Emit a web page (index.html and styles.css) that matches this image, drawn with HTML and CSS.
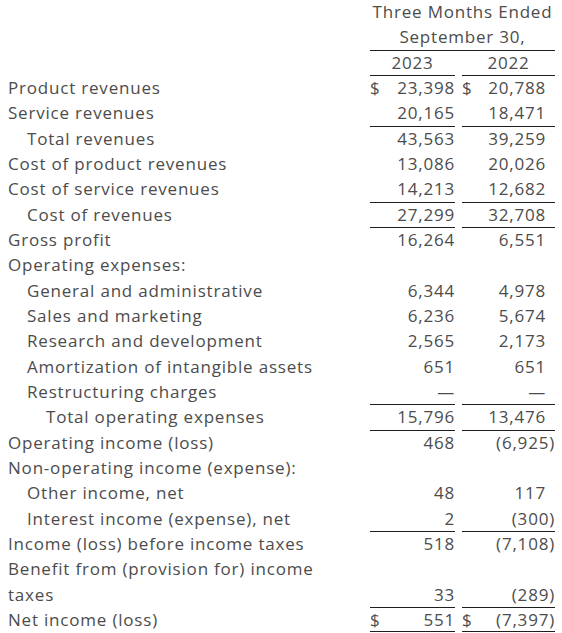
FILE: index.html
```html
<!DOCTYPE html>
<html lang="en">
<head>
    <meta charset="UTF-8">
    <meta name="viewport" content="width=device-width, initial-scale=1.0">
    <title>Condensed Statements of Operations</title>
    <link rel="stylesheet" href="styles.css">
</head>
<body>

<table class="ops">
    <colgroup>
        <col class="c-label">
        <col class="c-num">
        <col class="c-gap">
        <col class="c-num2">
    </colgroup>
    <thead>
        <tr class="head">
            <td></td>
            <td colspan="3" class="center">Three Months Ended</td>
        </tr>
        <tr class="head">
            <td></td>
            <td colspan="3" class="center">September 30,</td>
        </tr>
        <tr class="years">
            <td></td>
            <td class="center rule">2023</td>
            <td class="rule"></td>
            <td class="center rule">2022</td>
        </tr>
    </thead>
    <tbody>
        <tr>
            <td>Product revenues</td>
            <td class="num rule"><span class="cur">$</span>23,398</td>
            <td></td>
            <td class="num num2 rule"><span class="cur">$</span>20,788</td>
        </tr>
        <tr>
            <td>Service revenues</td>
            <td class="num">20,165</td>
            <td></td>
            <td class="num num2">18,471</td>
        </tr>
        <tr>
            <td class="i1">Total revenues</td>
            <td class="num rule">43,563</td>
            <td></td>
            <td class="num num2 rule">39,259</td>
        </tr>
        <tr>
            <td>Cost of product revenues</td>
            <td class="num">13,086</td>
            <td></td>
            <td class="num num2">20,026</td>
        </tr>
        <tr>
            <td>Cost of service revenues</td>
            <td class="num">14,213</td>
            <td></td>
            <td class="num num2">12,682</td>
        </tr>
        <tr>
            <td class="i1">Cost of revenues</td>
            <td class="num rule">27,299</td>
            <td></td>
            <td class="num num2 rule">32,708</td>
        </tr>
        <tr>
            <td>Gross profit</td>
            <td class="num rule">16,264</td>
            <td></td>
            <td class="num num2 rule">6,551</td>
        </tr>
        <tr>
            <td>Operating expenses:</td>
            <td></td>
            <td></td>
            <td></td>
        </tr>
        <tr>
            <td class="i1">General and administrative</td>
            <td class="num">6,344</td>
            <td></td>
            <td class="num num2">4,978</td>
        </tr>
        <tr>
            <td class="i1">Sales and marketing</td>
            <td class="num">6,236</td>
            <td></td>
            <td class="num num2">5,674</td>
        </tr>
        <tr>
            <td class="i1">Research and development</td>
            <td class="num">2,565</td>
            <td></td>
            <td class="num num2">2,173</td>
        </tr>
        <tr>
            <td class="i1">Amortization of intangible assets</td>
            <td class="num">651</td>
            <td></td>
            <td class="num num2">651</td>
        </tr>
        <tr>
            <td class="i1">Restructuring charges</td>
            <td class="num">&mdash;</td>
            <td></td>
            <td class="num num2">&mdash;</td>
        </tr>
        <tr>
            <td class="i2">Total operating expenses</td>
            <td class="num rule">15,796</td>
            <td></td>
            <td class="num num2 rule">13,476</td>
        </tr>
        <tr>
            <td>Operating income (loss)</td>
            <td class="num rule">468</td>
            <td></td>
            <td class="num num2 rule"><span class="neg">(6,925)</span></td>
        </tr>
        <tr>
            <td>Non-operating income (expense):</td>
            <td></td>
            <td></td>
            <td></td>
        </tr>
        <tr>
            <td class="i1">Other income, net</td>
            <td class="num">48</td>
            <td></td>
            <td class="num num2">117</td>
        </tr>
        <tr>
            <td class="i1">Interest income (expense), net</td>
            <td class="num">2</td>
            <td></td>
            <td class="num num2"><span class="neg">(300)</span></td>
        </tr>
        <tr>
            <td>Income (loss) before income taxes</td>
            <td class="num rule">518</td>
            <td></td>
            <td class="num num2 rule"><span class="neg">(7,108)</span></td>
        </tr>
        <tr>
            <td>Benefit from (provision for) income<br>taxes</td>
            <td class="num">33</td>
            <td></td>
            <td class="num num2"><span class="neg">(289)</span></td>
        </tr>
        <tr>
            <td>Net income (loss)</td>
            <td class="num rule total"><span class="cur">$</span>551</td>
            <td></td>
            <td class="num num2 rule total"><span class="cur">$</span><span class="neg">(7,397)</span></td>
        </tr>
    </tbody>
</table>

</body>
</html>
```

FILE: styles.css
```css
body {
    margin: 0;
    background: #fff;
    color: #4c4c4c;
    font-family: "Open Sans", Arial, sans-serif;
    font-size: 17px;
    letter-spacing: 0.8px;
}
.ops {
    margin-left: 8px;
    width: 547px;
    table-layout: fixed;
    border-collapse: separate;
    border-spacing: 0;
}
.c-label {
    width: 362px;
}
.c-num {
    width: 85px;
}
.c-gap {
    width: 7px;
}
.c-num2 {
    width: 93px;
}
td {
    padding: 0;
    line-height: 25.33px;
    white-space: nowrap;
    vertical-align: bottom;
}
.head td,
.years td {
    line-height: 25px;
}
.head td.center {
    position: relative;
    top: -1px;
}
.center {
    text-align: center;
}
.i1 {
    padding-left: 19px;
}
.i2 {
    padding-left: 38px;
}
.num {
    text-align: right;
}
.num2 {
    padding-right: 9px;
}
.neg {
    margin-right: -9px;
}
.cur {
    float: left;
}
.rule {
    box-shadow: inset 0 1px 0 #1e1e1e;
}
.rule.total {
    box-shadow: inset 0 1px 0 #1e1e1e, inset 0 -1px 0 #1e1e1e;
}
```
